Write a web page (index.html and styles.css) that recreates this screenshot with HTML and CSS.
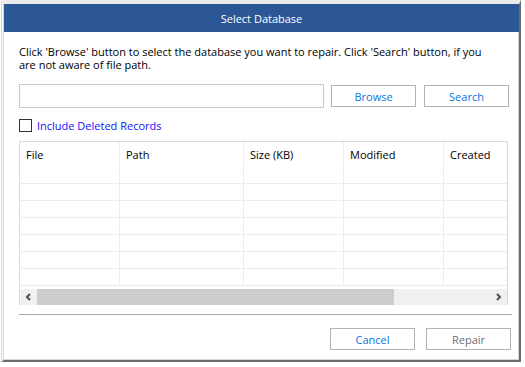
FILE: index.html
```html
<!DOCTYPE html>
<html>
<head>
<meta charset="utf-8">
<link rel="stylesheet" href="styles.css">
</head>
<body>
<div class="frame">
  <div class="titlebar">Select Database</div>
  <div class="content">
    <p class="desc">Click 'Browse' button to select the database you want to repair. Click 'Search' button, if you are not aware of file path.</p>
    <div class="path-row">
      <div class="path-input"></div>
      <button class="btn btn-active">Browse</button>
      <button class="btn btn-active">Search</button>
    </div>
    <label class="check-row"><span class="checkbox"></span><span class="check-label">Include Deleted Records</span></label>
    <div class="grid-box">
      <div class="grid-scroll">
        <div class="grid">
          <div class="head">File</div><div class="head">Path</div><div class="head">Size (KB)</div><div class="head">Modified</div><div class="head last">Created</div>
          <div class="cell"></div><div class="cell"></div><div class="cell"></div><div class="cell"></div><div class="cell last"></div>
          <div class="cell"></div><div class="cell"></div><div class="cell"></div><div class="cell"></div><div class="cell last"></div>
          <div class="cell"></div><div class="cell"></div><div class="cell"></div><div class="cell"></div><div class="cell last"></div>
          <div class="cell"></div><div class="cell"></div><div class="cell"></div><div class="cell"></div><div class="cell last"></div>
          <div class="cell"></div><div class="cell"></div><div class="cell"></div><div class="cell"></div><div class="cell last"></div>
          <div class="cell"></div><div class="cell"></div><div class="cell"></div><div class="cell"></div><div class="cell last"></div>
          <div class="cell"></div><div class="cell"></div><div class="cell"></div><div class="cell"></div><div class="cell last"></div>
        </div>
      </div>
      <div class="hscroll">
        <span class="arrow"><svg width="7" height="8" viewBox="0 0 7 8"><polyline points="5,1 2,4 5,7" fill="none" stroke="#505050" stroke-width="2"/></svg></span>
        <div class="track"><div class="thumb"></div></div>
        <span class="arrow"><svg width="7" height="8" viewBox="0 0 7 8"><polyline points="2,1 5,4 2,7" fill="none" stroke="#505050" stroke-width="2"/></svg></span>
      </div>
    </div>
    <div class="divider"></div>
    <div class="footer">
      <button class="btn btn-active">Cancel</button>
      <button class="btn btn-disabled">Repair</button>
    </div>
  </div>
</div>
</body>
</html>
```
FILE: styles.css
```css
html, body {
  margin: 0;
  padding: 0;
  background: #ffffff;
}
body {
  font-family: "Open Sans", "Liberation Sans", Arial, sans-serif;
  font-size: 11px;
  color: #000;
}
.frame {
  margin-left: 1px;
  width: 520px;
  height: 362px;
  box-sizing: border-box;
  border-top: 4px solid #ebebeb;
  border-left: 3px double #d4d4d4;
  border-right: 2px solid #6b6b6b;
  border-bottom: 2px solid #6b6b6b;
  display: flex;
  flex-direction: column;
}
.titlebar {
  height: 28px;
  background: #2b5797;
  color: #ffffff;
  display: flex;
  align-items: center;
  justify-content: center;
  flex: none;
}
.content {
  flex: 1;
  border-right: 1px solid #d6d6d6;
  border-bottom: 1px solid #d6d6d6;
  padding: 13px 9px 0 15px;
  display: flex;
  flex-direction: column;
}
.desc {
  margin: 0;
  max-width: 470px;
  line-height: 13px;
}
.path-row {
  margin-top: 13px;
  display: flex;
  align-items: center;
  gap: 7px;
}
.path-input {
  width: 305px;
  height: 24px;
  box-sizing: border-box;
  border: 1px solid #c8c8c8;
  background: #fff;
}
.btn {
  width: 85px;
  height: 22px;
  box-sizing: border-box;
  border: 1px solid #b4b4b4;
  background: #ffffff;
  font-family: inherit;
  font-size: 11px;
  padding: 0;
}
.path-row .btn + .btn {
  margin-left: 1px;
}
.btn-active { color: #0a74e0; }
.btn-disabled { color: #6e6e6e; }
.check-row {
  margin-top: 11px;
  display: flex;
  align-items: center;
  gap: 5px;
  height: 13px;
}
.checkbox {
  width: 13px;
  height: 13px;
  box-sizing: border-box;
  border: 1px solid #333333;
  background: #fff;
}
.check-label {
  color: #1010ff;
}
.grid-box {
  margin-top: 9px;
  width: 489px;
  box-sizing: border-box;
  border: 1px solid #dadada;
  border-bottom: none;
}
.grid-scroll {
  overflow: hidden;
  height: 145px;
}
.grid {
  display: grid;
  grid-template-columns: 100px 124px 100px 100px 200px;
  width: 624px;
}
.head {
  height: 25px;
  line-height: 25px;
  padding-left: 6px;
  border-right: 1px solid #ededed;
}
.cell {
  height: 16px;
  border-right: 1px solid #ececec;
  border-bottom: 1px solid #ececec;
}
.hscroll {
  margin-top: 2px;
  height: 16px;
  background: #f0f0f0;
  display: flex;
  align-items: center;
}
.arrow {
  width: 17px;
  height: 16px;
  display: flex;
  align-items: center;
  justify-content: center;
  flex: none;
}
.track {
  flex: 1;
  height: 16px;
}
.thumb {
  width: 357px;
  height: 16px;
  background: #cdcdcd;
}
.divider {
  margin-top: 9px;
  margin-right: -3px;
  height: 1px;
  background: #a6a6a6;
}
.footer {
  margin-top: 13px;
  margin-right: -2px;
  display: flex;
  justify-content: flex-end;
  gap: 11px;
}
```
